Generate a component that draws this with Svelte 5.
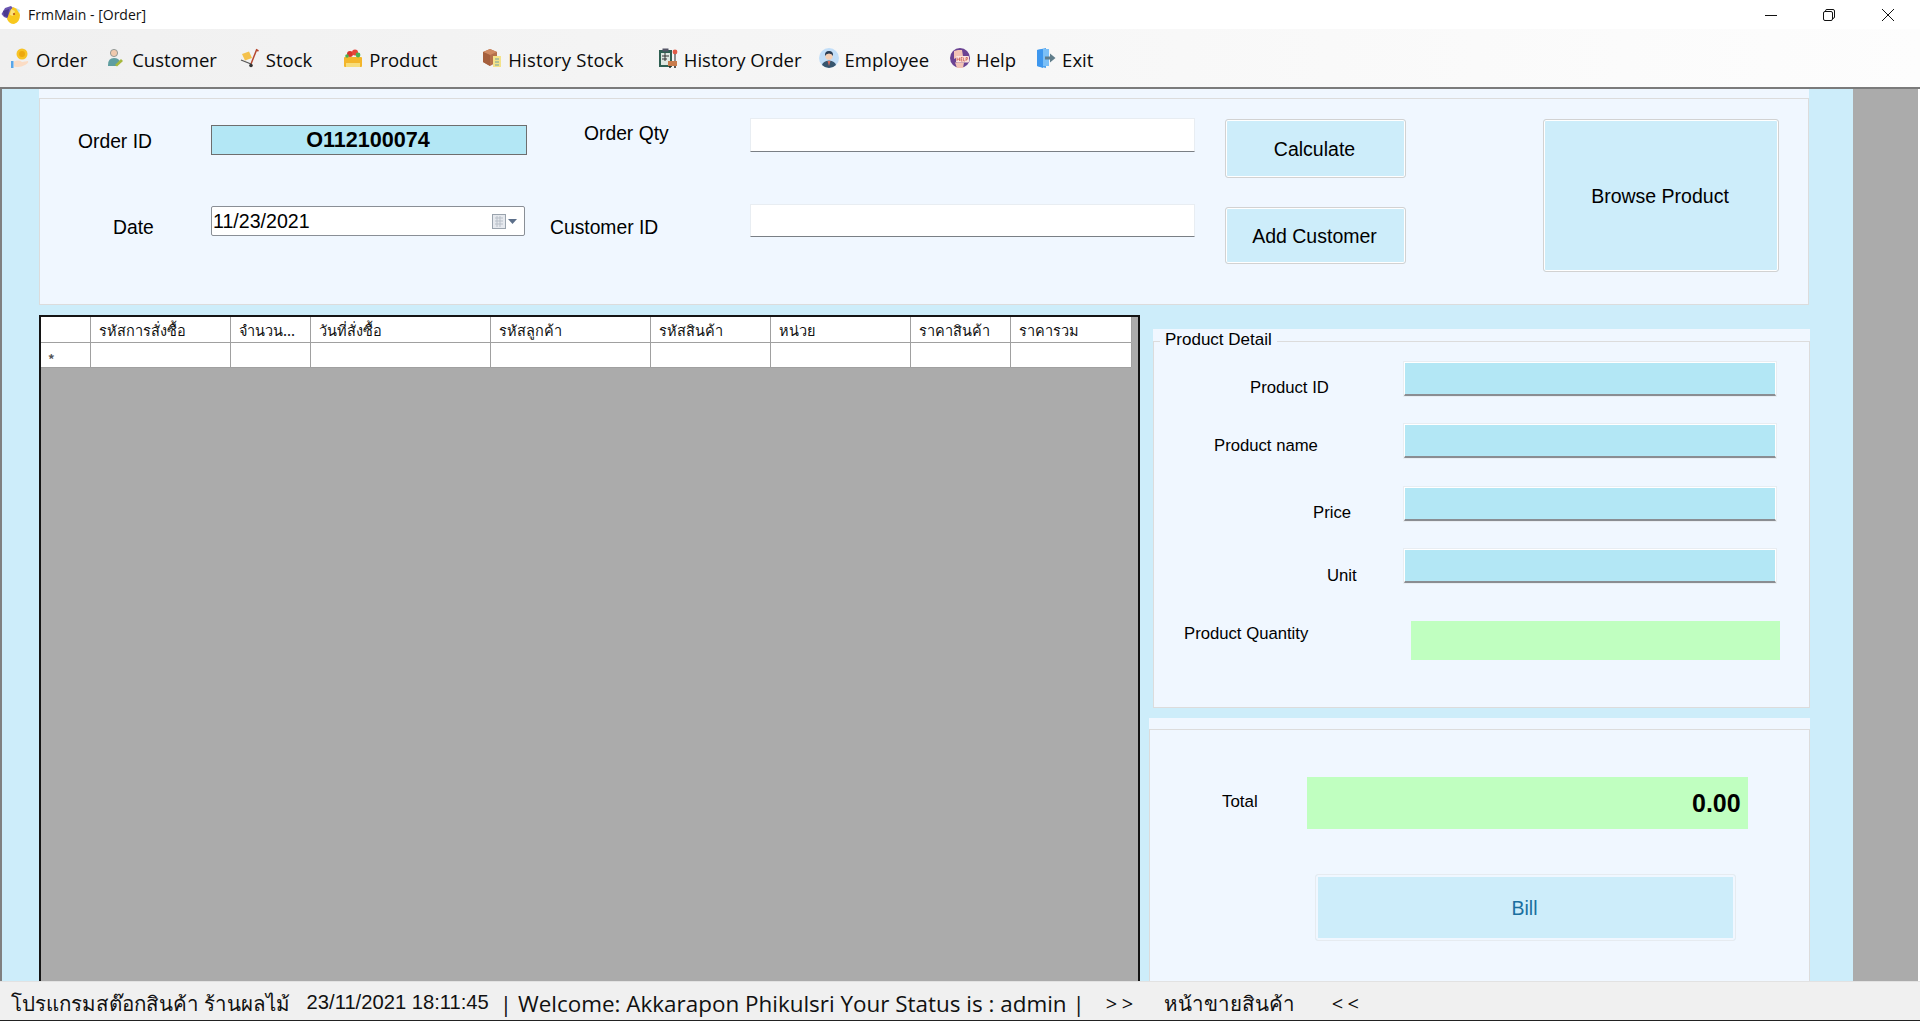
<script>
  const menu = [
    { label: 'Order', icon: 'order', gap: 'm-order' },
    { label: 'Customer', icon: 'customer', gap: 'm-customer' },
    { label: 'Stock', icon: 'stock', gap: 'm-stock' },
    { label: 'Product', icon: 'product', gap: 'm-product' },
    { label: 'History Stock', icon: 'hstock', gap: 'm-hstock' },
    { label: 'History Order', icon: 'horder', gap: 'm-horder' },
    { label: 'Employee', icon: 'employee', gap: 'm-employee' },
    { label: 'Help', icon: 'help', gap: 'm-help' },
    { label: 'Exit', icon: 'exit', gap: 'm-exit' }
  ];
  const columns = [
    { title: 'รหัสการสั่งซื้อ', width: 140 },
    { title: 'จำนวน...', width: 80 },
    { title: 'วันที่สั่งซื้อ', width: 180 },
    { title: 'รหัสลูกค้า', width: 160 },
    { title: 'รหัสสินค้า', width: 120 },
    { title: 'หน่วย', width: 140 },
    { title: 'ราคาสินค้า', width: 100 },
    { title: 'ราคารวม', width: 121 }
  ];
  const fields = [
    { label: 'Product ID', cls: 'l1', green: false },
    { label: 'Product name', cls: 'l2', green: false },
    { label: 'Price', cls: 'l3', green: false },
    { label: 'Unit', cls: 'l4', green: false },
    { label: 'Product Quantity', cls: 'l5', green: true }
  ];
</script>

<div class="window">
  <header class="title">
    <svg class="logo" viewBox="0 0 20 20" aria-hidden="true">
      <path d="M10 1 L4 3 L0.5 9 L3 12 L8 14 L12 3Z" fill="#6a55b0"/>
      <path d="M2 6 L8 4 L7 12 L3 11Z" fill="#4a3a8e"/>
      <path d="M12 2 Q18 4 19 10 Q19 17 13 19 Q8 19 6 14 L9 6Z" fill="#f8c81e"/>
      <path d="M10 4 L14 6 L12 11 L9 10Z" fill="#fbe27a"/>
      <circle cx="13" cy="9" r="1.1" fill="#b5521c"/>
      <path d="M15 3 L19 5 L18 8Z" fill="#bfe3f2"/>
    </svg>
    <span class="title-text">FrmMain - [Order]</span>
    <div class="controls">
      <svg class="ctl c-min" viewBox="0 0 12 12" aria-hidden="true"><path d="M0 6.5H12" stroke="#111" fill="none"/></svg>
      <svg class="ctl c-max" viewBox="0 0 12 12" aria-hidden="true"><rect x="0.5" y="2.5" width="9" height="9" rx="1.5" fill="none" stroke="#111"/><path d="M2.5 2.5V1.8Q2.5 .5 4 .5H10Q11.5 .5 11.5 2V8Q11.5 9.5 9.5 9.5" fill="none" stroke="#111"/></svg>
      <svg class="ctl c-close" viewBox="0 0 12 12" aria-hidden="true"><path d="M0 0L12 12M12 0L0 12" stroke="#111" fill="none"/></svg>
    </div>
  </header>

  <nav class="menu">
    {#each menu as item}
      <div class="menu-item {item.gap}">
        <svg class="micon" viewBox="0 0 20 20" aria-hidden="true">
          {#if item.icon === 'order'}
            <circle cx="12" cy="6" r="5.5" fill="#f7c325"/>
            <circle cx="12" cy="6" r="3" fill="#eda80f"/>
            <rect x="1" y="13" width="2.5" height="7" fill="#5aa6e8"/>
            <path d="M4 13.5 Q9 11.5 12 14 L18 13 Q19 15 15 17 Q10 20 4 18.5Z" fill="#fbdcc4"/>
          {:else if item.icon === 'customer'}
            <circle cx="8" cy="5" r="3.6" fill="#f0c9ae" stroke="#7d8a8a" stroke-width=".8"/>
            <path d="M2 17 Q2 10 8 10 Q13 10 14 14 L10 18 H2Z" fill="#5f9ea0"/>
            <path d="M9 17 L15 11 L17 13 L11 18.5Z" fill="#a6b83c"/>
          {:else if item.icon === 'stock'}
            <path d="M16 1.5 L18.5 3 M16.5 2 L11 16" stroke="#b5472f" stroke-width="1.5" fill="none"/>
            <path d="M1 12 L11 16" stroke="#555" stroke-width="1.3"/>
            <path d="M2 6 L9 3.5 L12 10 L5 12.5Z" fill="#f4c14c"/>
            <circle cx="11" cy="17.5" r="1.8" fill="#333"/>
          {:else if item.icon === 'product'}
            <rect x="1" y="9" width="18" height="10" rx="1" fill="#f3b62b"/>
            <rect x="3" y="15" width="14" height="4" fill="#f7dd7a"/>
            <circle cx="7" cy="6" r="3" fill="#d9352c"/>
            <circle cx="12" cy="4.5" r="3" fill="#e8453a"/>
            <circle cx="15" cy="7" r="2.4" fill="#4caf50"/>
            <circle cx="4" cy="8" r="1.8" fill="#4caf50"/>
          {:else if item.icon === 'hstock'}
            <path d="M1 4 L8 1 L15 4 V14 L8 18 L1 14Z" fill="#b5704b"/>
            <path d="M8 1 L15 4 L8 7 L1 4Z" fill="#cf8a62"/>
            <path d="M8 7V18L1 14V4Z" fill="#a55f3c"/>
            <rect x="11" y="8" width="8" height="11" fill="#f4e38a"/>
            <path d="M13 11H17M13 14H17M13 17H17" stroke="#6fa3a3"/>
          {:else if item.icon === 'horder'}
            <rect x="1" y="2" width="13" height="17" fill="#2f5f52"/>
            <rect x="3" y="5" width="9" height="12" fill="#dfe8e2"/>
            <path d="M4 8H11M4 11H9M7 5V13" stroke="#333"/>
            <rect x="4.5" y="0.5" width="6" height="3" fill="#556"/>
            <circle cx="17" cy="4" r="2.4" fill="#e05a47"/>
            <path d="M17 6V13" stroke="#555" stroke-width="1.3"/>
            <rect x="10" y="13" width="9" height="5" fill="#c97c4c"/>
            <circle cx="12" cy="19" r="1" fill="#222"/><circle cx="17" cy="19" r="1" fill="#222"/>
          {:else if item.icon === 'employee'}
            <circle cx="10" cy="10" r="10" fill="#c2def8"/>
            <path d="M3 17 Q4 13 10 12.5 Q16 13 17 17 Q14 20 10 20 Q6 20 3 17Z" fill="#37556e"/>
            <path d="M8.5 13 L10 18 L11.5 13Z" fill="#d76d5e"/>
            <circle cx="10" cy="8" r="3.7" fill="#f4cfb5"/>
            <path d="M6 8 Q5.5 3 10 3 Q14.5 3 14 8 Q13 5.5 10 5.5 Q7 5.5 6 8Z" fill="#2a3d54"/>
          {:else if item.icon === 'help'}
            <circle cx="10" cy="10" r="10" fill="#6b4393"/>
            <path d="M4 11 L4 3 L8 2 L12 2 L13 8 L10 8Z" fill="#f2c3b5"/>
            <rect x="6" y="8" width="13" height="6.5" rx="1" fill="#fbe4dc"/>
            <path d="M7 9.5V13M9.5 9.5V13M7 11.2H9.5M11 9.5H12.6M11 11.2H12.4M11 13H12.6M11 9.5V13M13.6 9.5V13H15M16 13V9.5H17.4V11.3H16" stroke="#c0392b" stroke-width=".6" fill="none"/>
            <path d="M5 14.5 H14 L13 20 H7Z" fill="#f2c3b5"/>
          {:else if item.icon === 'exit'}
            <path d="M1 2 L10 0 V20 L1 18Z" fill="#4da3f0"/>
            <rect x="6" y="1" width="7" height="17" fill="#7cc0f7"/>
            <path d="M1 2 L7 1 V20 L1 18Z" fill="#3e97ee"/>
            <path d="M9 8.5H14V5.5L19.5 10L14 14.5V11.5H9Z" fill="#607d8b"/>
          {/if}
        </svg>
        <span>{item.label}</span>
      </div>
    {/each}
  </nav>

  <main class="main">
    <div class="work">
      <section class="group top">
        <div class="frame top-grid">
          <span class="lbl order-lbl">Order ID</span>
          <div class="order-box"><span>O112100074</span></div>
          <span class="lbl qty-lbl">Order Qty</span>
          <div class="input input-1"></div>
          <button class="btn calc">Calculate</button>
          <button class="btn browse">Browse Product</button>

          <span class="lbl date-lbl">Date</span>
          <div class="picker">
            <span>11/23/2021</span>
            <svg class="cal" viewBox="0 0 25 15" aria-hidden="true">
              <rect x=".5" y=".5" width="13" height="14" fill="#e6e9ee" stroke="#9aa3ad"/>
              <path d="M3 4H11M3 7H11M3 10H11M5 2V13M8 2V13" stroke="#b9c0c9"/>
              <path d="M16 5H25L20.5 10Z" fill="#5c6f8a"/>
            </svg>
          </div>
          <span class="lbl cust-lbl">Customer ID</span>
          <div class="input input-2"></div>
          <button class="btn add">Add Customer</button>
        </div>
      </section>

      <div class="lower">
        <div class="datagrid">
          <div class="grow ghead">
            <div class="cell rowh"></div>
            {#each columns as c}
              <div class="cell" style="width:{c.width}px">{c.title}</div>
            {/each}
          </div>
          <div class="grow gbody">
            <div class="cell rowh star">*</div>
            {#each columns as c}
              <div class="cell" style="width:{c.width}px"></div>
            {/each}
          </div>
        </div>

        <div class="side">
          <section class="group detail">
            <div class="frame detail-frame">
              <div class="legend">Product Detail</div>
              <div class="rows">
                {#each fields as f}
                  <div class="row {f.cls}">
                    <span class="lbl">{f.label}</span>
                    <div class={f.green ? 'green-field' : 'blue-field'}></div>
                  </div>
                {/each}
              </div>
            </div>
          </section>

          <section class="group total">
            <div class="frame total-frame">
              <div class="total-row">
                <span class="lbl total-lbl">Total</span>
                <div class="total-val">0.00</div>
              </div>
              <button class="btn bill">Bill</button>
            </div>
          </section>
        </div>
      </div>
    </div>
    <div class="mdi"></div>
  </main>

  <footer class="status">
    <span class="s-prog">โปรแกรมสต๊อกสินค้า ร้านผลไม้</span>
    <span class="s-date">23/11/2021 18:11:45</span>
    <span class="s-welcome">| Welcome: Akkarapon Phikulsri Your Status is : admin |</span>
    <span class="s-open">&gt;&gt;</span>
    <span class="s-page">หน้าขายสินค้า</span>
    <span class="s-close">&lt;&lt;</span>
  </footer>
</div>

<style>
  :global(body) { margin: 0; background: #fff; }
  .window {
    width: 1920px; height: 1021px; display: flex; flex-direction: column; overflow: hidden;
    font-family: "Liberation Sans", Arial, sans-serif; color: #000; background: #fff;
  }
  .title { height: 29px; display: flex; align-items: center; background: #fff; flex: none; }
  .logo { width: 20px; height: 20px; margin-left: 1px; }
  .title-text { margin-left: 7px; font: 14px "Open Sans", sans-serif; color: #111; }
  .controls { margin-left: auto; display: flex; align-items: center; margin-right: 26px; }
  .ctl { width: 12px; height: 12px; }
  .c-max { margin-left: 46px; }
  .c-close { margin-left: 47px; }

  .menu {
    flex: none; display: flex; align-items: center; padding: 2px 0 0 10px; box-sizing: border-box;
    height: 60px;
    background: linear-gradient(90deg, #f0f0f0, #fdfdfd);
    border-bottom: 2px solid #7b7b7b;
    font: 18.5px "Open Sans", sans-serif; color: #0a0a0a;
  }
  .menu-item { display: flex; align-items: center; gap: 6px; }
  .micon { width: 20px; height: 20px; flex: none; margin-top: -2px; }
  .m-customer { margin-left: 19px; }
  .m-stock { margin-left: 23px; }
  .m-product { margin-left: 31px; }
  .m-hstock { margin-left: 45px; }
  .m-hstock span { letter-spacing: 0.2px; }
  .m-horder { margin-left: 34px; }
  .m-employee { margin-left: 17px; }
  .m-help { margin-left: 21px; }
  .m-exit { margin-left: 20px; }

  .main { flex: 1; display: flex; min-height: 0; padding-right: 2px; border-left: 2px solid #808080; }
  .work { width: 1851px; flex: none; background: #cdedfa; padding-left: 37px; box-sizing: border-box; display: flex; flex-direction: column; min-height: 0; }
  .mdi { flex: 1; background: #ababab; }

  .group { background: #f0f7ff; box-sizing: border-box; }
  .frame { border: 1px solid #dcdcdc; box-sizing: border-box; }
  .top { width: 1770px; height: 216px; padding-top: 9px; flex: none; }
  .top-grid {
    height: 207px; display: grid;
    grid-template-columns: 171px 316px 223px 445px 30px 181px 137px 236px 1fr;
    grid-template-rows: 91px 1fr;
    align-items: start; justify-items: start;
  }
  .lbl { font-size: 19.3px; line-height: 22px; white-space: nowrap; }
  .order-lbl { grid-area: 1 / 1; margin: 32px 0 0 38px; }
  .order-box {
    grid-area: 1 / 2; margin-top: 26px; width: 100%; height: 30px; box-sizing: border-box;
    background: #b3e7f5; border: 1px solid #6e6e6e;
    display: flex; align-items: center; justify-content: center;
    font-weight: 700; font-size: 21.6px;
  }
  .order-box span { margin-right: 2px; }
  .qty-lbl { grid-area: 1 / 3; margin: 24px 0 0 57px; }
  .input { width: 100%; background: #fff; box-sizing: border-box; border: 1px solid #e8edf2; border-bottom: 1px solid #7a7f85; }
  .input-1 { grid-area: 1 / 4; margin-top: 19px; height: 34px; }
  .btn {
    display: flex; align-items: center; justify-content: center; padding: 2px 2px 0 0;
    width: 100%; box-sizing: border-box;
    background: #cdedfa; border: 1px solid #d2d2d2; border-radius: 3px;
    box-shadow: inset 0 0 0 1px #fff;
    font: 19.5px "Liberation Sans", Arial, sans-serif; color: #000;
  }
  .calc { grid-area: 1 / 6; margin-top: 20px; height: 59px; }
  .browse { grid-area: 1 / 8 / 3 / 8; margin-top: 20px; height: 153px; }
  .date-lbl { grid-area: 2 / 1; margin: 27px 0 0 73px; }
  .picker {
    grid-area: 2 / 2; margin-top: 16px; width: 314px; height: 30px; box-sizing: border-box;
    background: #fff; border: 1px solid #8a8f96; border-radius: 2px;
    display: flex; align-items: center; justify-content: space-between;
    padding: 0 7px 0 1px; font-size: 19.6px;
  }
  .cal { width: 25px; height: 15px; }
  .cust-lbl { grid-area: 2 / 3; margin: 27px 0 0 23px; }
  .input-2 { grid-area: 2 / 4; margin-top: 14px; height: 33px; }
  .add { grid-area: 2 / 6; margin-top: 17px; height: 57px; }

  .lower { flex: 1; display: flex; min-height: 0; margin-top: 10px; }
  .datagrid {
    width: 1101px; flex: none; background: #ababab; box-sizing: border-box;
    border: 2px solid #141414; border-bottom: 0; overflow: hidden;
  }
  .grow { display: flex; background: #fff; width: 1090px; }
  .ghead { height: 26px; border-bottom: 1px solid #a0a0a0; box-sizing: border-box; }
  .gbody { height: 25px; border-bottom: 1px solid #a0a0a0; box-sizing: border-box; }
  .cell {
    flex: none; box-sizing: border-box; border-right: 1px solid #a0a0a0;
    padding-left: 8px; font: 14.5px "Noto Sans CJK SC", "Liberation Sans", sans-serif;
    line-height: 25px; white-space: nowrap; overflow: hidden; color: #111;
  }
  .rowh { width: 50px; padding-left: 7px; }
  .star { font-size: 13px; font-weight: 700; color: #555; line-height: 16px; padding-top: 8px; overflow: visible; }

  .side { width: 661px; margin-left: 9px; display: flex; flex-direction: column; min-height: 0; }
  .detail { margin: 14px 0 0 4px; height: 379px; padding-top: 12px; flex: none; }
  .detail-frame { height: 367px; }
  .legend {
    width: fit-content; background: #f0f7ff; padding: 0 5px; margin: -13px 0 0 6px;
    font-size: 17px; line-height: 22px; white-space: nowrap;
  }
  .rows { padding-top: 11px; }
  .row { display: flex; align-items: flex-start; }
  .row .lbl { font-size: 16.7px; }
  .row > div { margin-left: auto; margin-right: 33px; }
  .blue-field {
    width: 372px; height: 34px; box-sizing: border-box; background: #b3e7f5;
    border: 1px solid #fff; outline: 1px solid #e8edf2;
    border-bottom: 2px solid #8a8d92;
  }
  .green-field { width: 369px; height: 39px; background: #c0ffc0; }
  .row .green-field { margin-right: 29px; }
  .l1 { height: 62px; }
  .l2 { height: 63px; }
  .l3 { height: 62px; }
  .l4 { height: 72px; }
  .l1 .lbl { margin: 15px 0 0 96px; }
  .l2 .lbl { margin: 11px 0 0 60px; }
  .l3 .lbl { margin: 15px 0 0 159px; }
  .l4 .lbl { margin: 16px 0 0 173px; }
  .l5 .lbl { margin: 2px 0 0 30px; }

  .total { margin-top: 10px; flex: 1; padding-top: 11px; min-height: 0; }
  .total-frame { height: 100%; border-bottom: 0; padding: 47px 0 0; }
  .total-row { display: flex; align-items: flex-start; }
  .total-lbl { font-size: 16.9px; margin: 14px 0 0 72px; }
  .total-val {
    width: 441px; height: 52px; margin-left: 49px; background: #c0ffc0; box-sizing: border-box;
    padding-right: 7px; display: flex; align-items: center; justify-content: flex-end;
    font-weight: 700; font-size: 25px;
  }
  .bill {
    width: 421px; height: 67px; margin: 45px 0 0 165px; color: #1a6f9f;
    border-color: #e6ebf0; box-shadow: inset 0 0 0 2px #f0f7ff;
  }

  .status {
    height: 40px; flex: none; box-sizing: border-box; background: #f0f0f0;
    border-top: 1px solid #e2e2e2; border-bottom: 1px solid #222;
    display: flex; align-items: center; padding: 4px 0 0 11px; white-space: nowrap;
    font: 22.45px "Open Sans", sans-serif; color: #111;
  }
  .s-prog { font-family: "Noto Sans CJK SC", "Open Sans", sans-serif; font-size: 20.5px; }
  .s-date { margin: 0 0 2px 17px; font: 20.2px "Liberation Sans", sans-serif; }
  .s-welcome { margin-left: 11px; }
  .s-open { margin-left: 21px; font-size: 20px; letter-spacing: 4.5px; }
  .s-page { margin-left: 26px; font-family: "Noto Sans CJK SC", "Open Sans", sans-serif; font-size: 20.5px; }
  .s-close { margin-left: 37px; font-size: 20px; letter-spacing: 4.5px; }
</style>
